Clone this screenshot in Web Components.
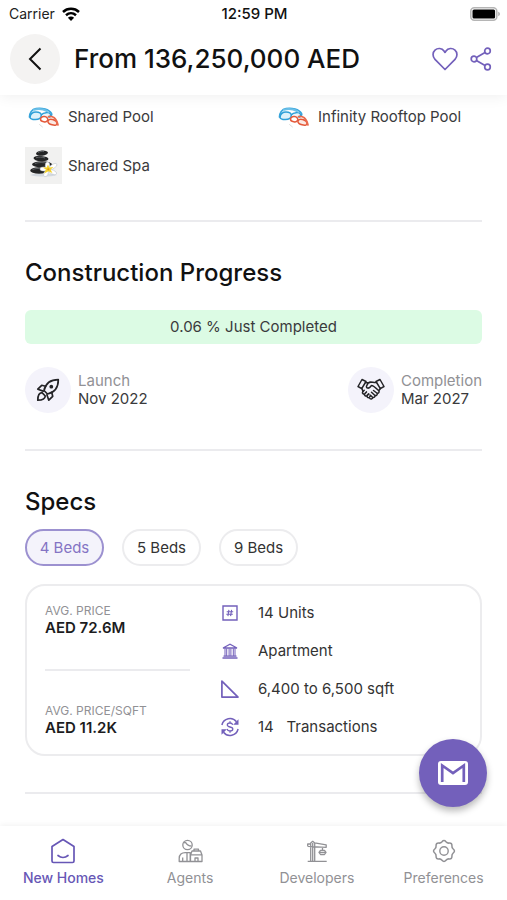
<!DOCTYPE html>
<html lang="en">
<head>
<meta charset="utf-8">
<meta name="viewport" content="width=device-width, initial-scale=1">
<title>From 136,250,000 AED</title>
<style>
  :root {
    --accent: #7360bb;
    --ink: #111;
    --text: #3a3a3c;
    --muted: #919195;
    --line: #ebebee;
    --tint: #f4f3fb;
  }
  html, body { margin: 0; height: 100%; }
  body { background: #fff; color: var(--text); font-family: Inter, "Liberation Sans", sans-serif; font-size: 15px; line-height: 20px; }
</style>
</head>
<body>
<listing-screen></listing-screen>
<script>
const ICONS = {
  wifi: ['0 0 18 14', `<g fill="none" stroke="#000" stroke-width="2.5"><path d="M1 5C5.500.8 12.500.8 17 5"/><path d="M4 8.200c3-2.700 7-2.700 10 0"/></g><path d="M9 14 5.900 10.700c1.800-1.500 4.400-1.500 6.200 0Z"/>`],
  battery: ['0 0 30 14', `<rect x=".8" y=".8" width="26" height="12.400" rx="3.500" fill="#fff" stroke="#b5b5b5" stroke-width="1.500"/><rect x="2.500" y="2.500" width="22.600" height="9" rx="1.500"/><path d="M28.300 4.800c2 .7 2 3.700 0 4.400Z" fill="#a5a5a5"/>`],
  back: ['0 0 14 24', `<path d="M12.500 1.500 2 12l10.500 10.500" fill="none" stroke="#111" stroke-width="2"/>`],
  heart: ['0 0 26 24', `<path d="M13 22.500 3 12.300C.3 9.500.5 5.300 3 3.100c2.800-2.500 7-2 9 .9l1 1.400L14 4c2-2.900 6.200-3.400 9-.9 2.500 2.200 2.700 6.400 0 9.200Z" fill="none" stroke="currentColor" stroke-width="1.700" stroke-linejoin="round"/>`],
  share: ['0 0 22 24', `<g fill="none" stroke="currentColor" stroke-width="1.700"><circle cx="4" cy="12" r="2.800"/><circle cx="17.500" cy="4" r="2.800"/><circle cx="17.500" cy="20" r="2.800"/><path d="m6.400 10.500 8.600-5M6.400 13.500l8.600 5"/></g>`],
  pool: ['0 0 37 37', `<g fill="none" stroke-linecap="round" stroke-linejoin="round"><path d="M4.500 19c0-4 2.500-8 6.500-8.500 6-.8 13 .5 15.500 5 .8 1.600-.5 3-2.500 3.500" stroke="#3aa6dc" stroke-width="1.700"/><path d="M5 19.300c.5-3.500 3-5.300 6-5.300 3.300 0 5.500 1.300 5.300 3.500-.3 2.800-3 4-6 4-2.700 0-5-.6-5.300-2.200Z" fill="#dff1fa" stroke="#2f9fd8" stroke-width="1.500"/><path d="M16.300 17c2-2.800 8-3.200 9.300-.5.500 1.200-.5 2-1.600 2.400" fill="#eaf6fb" stroke="#2f9fd8" stroke-width="1.400"/><path d="M9 11.700c4-1.200 9-.8 13 1.300" stroke="#6cc0e8" stroke-width="2"/><path d="M15.500 21.300c0-2 2-3 4-2.700 2.300.3 3.500 1.700 3.200 3.300-.4 1.700-2.200 2.300-4 1.900-1.900-.3-3.200-1.200-3.200-2.500Z" fill="#fff" stroke="#e4593a" stroke-width="1.500"/><path d="M23 23c.5-1.700 2.500-2 4.600-1.500 2.600.7 4.600 2.600 4.400 4.500-.2 1.300-2.500 1.500-4.900.8-2.600-.7-4.600-2-4.100-3.800Z" fill="#fbe8e2" stroke="#e4593a" stroke-width="1.500"/><path d="M23.500 18.500c4-1 8 1.500 9.500 8.500" stroke="#ea6a4c" stroke-width="1.700"/><path d="m14.500 26.500 3 2.500" stroke="#ddd" stroke-width="1"/></g>`],
  spa: ['0 0 37 37', `<path fill="#f1f1f0" d="M0 0h37v37H0z"/><path d="M5 28c5-2 23-2 27 0-6 2-21 2-27 0Z" fill="#d3d9e0"/><g fill="#242526"><ellipse cx="17" cy="6.200" rx="6" ry="2.600" transform="rotate(-6 17 6.200)"/><ellipse cx="16" cy="11.600" rx="7.500" ry="2.700" transform="rotate(4 16 11.600)"/><ellipse cx="17" cy="17.300" rx="10" ry="3"/><ellipse cx="14" cy="23.500" rx="8.800" ry="3.300"/></g><g stroke="#777b80" stroke-width=".7" fill="none"><path d="M13 5.500c2-1.200 4-1.300 6-.9M11 10.800c3-1 6-.9 9 .2M10 16.500c4-1.300 8-1.300 13 0M7.500 22.700c3-1.500 6-1.500 9-.7"/></g><g fill="#fff" stroke="#b9c1c7" stroke-width=".5"><ellipse cx="22.500" cy="18.800" rx="2.300" ry="3.800"/><ellipse cx="28" cy="19.500" rx="4.500" ry="2" transform="rotate(-32 28 19.500)"/><ellipse cx="27.500" cy="25" rx="4.500" ry="2" transform="rotate(25 27.500 25)"/><ellipse cx="21" cy="26.500" rx="2.100" ry="3.400" transform="rotate(25 21 26.500)"/><ellipse cx="18.500" cy="22" rx="3.500" ry="2"/></g><path d="m23 17.500 1.300 3.100 4.200-.5-2.900 2.500 1.800 3.500-4-1.900-4.300 2.400 1.800-4.100-3.200-2.100 4 .1Z" fill="#f3d22c"/><circle cx="23.300" cy="22.300" r="1.100" fill="#dd9c12"/>`],
  rocket: ['0 0 24 24', `<g fill="none" stroke="#242427" stroke-width="1.700" stroke-linejoin="round" stroke-linecap="round"><path d="M8 12.500C9.500 6 14.500 1.700 22.300 1.700c0 7.800-4.300 12.800-10.800 14.300Z"/><path d="m9.700 8.300-4-1-3.900 3.900 5.400 1.900M15.700 14.300l1 4-3.900 3.900-1.900-5.400"/><path d="M6 14.700c-3.200.3-4.200 2.800-4.200 7.500 4.700 0 7.200-1 7.500-4.200Z"/></g><circle cx="15.300" cy="8.700" r="1.900" fill="#242427"/>`],
  hands: ['0 0 28 24', `<g fill="none" stroke="#242427" stroke-width="1.500" stroke-linejoin="round" stroke-linecap="round"><path d="m5 1.500 4 2-4.300 7.200L1 8.500ZM23 1.500l-4 2 4.300 7.200L27 8.500Z"/><path d="M8.500 4.500c2 .5 3.400.3 4.500 0M19.500 4.500c-2.500.3-4-.5-6-.5-2.300 0-3 1.500-4 4.300-.5 2 2.300 2.500 3.700.7l1.300-1.600c2 0 3.500 1.600 7 5.100 1.500 1.500 0 3.400-1.700 2.500L16.500 12.500M20 15.200c.8 1.700-.8 3-2.300 2l-3.200-2.900M18 17.400c.4 1.600-1.200 2.600-2.600 1.600l-2.400-2M15.700 19.300c0 1.700-1.700 2.200-2.900 1.200M5 10.700 6 13.500M23.200 10.700l-1.400 2"/><path d="m7.200 12.200-1.500 1.600c-1 1.500.9 2.900 2.200 1.700l1.500-1.600M9.500 14l-1.700 1.800c-1 1.500.8 2.900 2.100 1.700l1.700-1.700M11.800 16l-1.500 1.600c-.9 1.500.9 2.700 2.100 1.600l1.200-1.400"/></g>`],
  units: ['0 0 20 20', `<g fill="none" stroke="currentColor"><path d="M3 3h14v14H3z" stroke-width="1.400"/><path d="m8.900 6.800-1 6.400m3.700-6.400-1 6.400M6.700 8.700h6.500M6.300 11.300h6.500" stroke-width="1.100"/></g>`],
  building: ['0 0 20 20', `<g fill="none" stroke="currentColor" stroke-width="1.300"><path d="M3 7 10 3.200 17 7ZM2.500 17h15M3.500 15.200h13"/><path d="M5 7.500v7.500m1.700-7.500v7.500m2.400-7.500v7.500m1.800-7.500v7.500m2.400-7.500v7.500m1.700-7.500v7.500" stroke-width="1"/></g>`],
  area: ['0 0 20 20', `<path d="M1.900 2.200v15.900H18Z" fill="none" stroke="currentColor" stroke-width="1.700" stroke-linejoin="round"/>`],
  money: ['0 0 20 20', `<g fill="none" stroke="currentColor" stroke-width="1.500"><path d="M1.900 8A8.300 8.300 0 0 1 16.500 4.800M18.100 12A8.300 8.300 0 0 1 3.500 15.200"/><path d="M12.700 7.700c-.5-1.300-1.500-1.700-2.800-1.700-1.600 0-2.600.8-2.600 2 0 2.700 5.500 1.300 5.500 4 0 1.200-1.100 2-2.800 2-1.600 0-2.600-.7-3-2M10 4.300v1.700M10 14v1.700" stroke-width="1.300"/></g><path d="M18.500 2.200v5.500h-5.300ZM1.500 17.800v-5.500h5.300Z" fill="currentColor"/>`],
  mail: ['0 0 30 24', `<rect width="30" height="24" rx="3" fill="#fff"/><path d="M4.200 21V4.500L15 12 25.800 4.500V21" fill="none" stroke="#7360bb" stroke-width="2.700"/>`],
  home: ['0 0 26 26', `<g fill="none" stroke="currentColor" stroke-width="1.700" stroke-linejoin="round" stroke-linecap="round"><path d="M2 8.500 13 1.500l11 7V23c0 1-.5 1.500-1.500 1.500h-19C2.500 24.500 2 24 2 23Z"/><path d="M8 17.500c3 2.600 7 2.600 10 0"/></g>`],
  agents: ['0 0 26 26', `<g fill="none" stroke="currentColor" stroke-width="1.300" stroke-linejoin="round"><circle cx="10.500" cy="7" r="4.700"/><path d="M6.500 5 8.500 4.300c1.500 2.500 3.500 3.700 6 3.700M2.200 23.500v-3c0-4 2.500-5.800 6-5.800h5v8.800ZM10 15v8.500M5.700 19.500v4M13.500 17l1.500-4h8.500l1.500 4v6.500H13.500ZM13.500 16.900h11.500M18 23.500v-3.500h3v3.500M17 12.800v-1.600h4.500v1.600"/></g>`],
  crane: ['0 0 26 26', `<g fill="none" stroke="currentColor" stroke-width="1.300" stroke-linejoin="round"><path d="M6.700 23V5l2-1.700 2 1.700v18M8.700 5v18M3.700 8.300V6h3M10.700 4.800l11.500 2v2.500L3.700 8.300M3.700 23.300h19M18.500 9.300v3M16.500 12.300h4l1.500 2-1.500 2.200h-4L15 14.300ZM15 14.300h7"/></g>`],
  gear: ['0 0 26 26', `<g fill="none" stroke="currentColor" stroke-width="1.400" stroke-linejoin="round"><path d="M11.200 4.600Q13 2.400 14.800 4.600 16 6 17.700 5.800 20.400 5.600 20.200 8.300 20 10 21.400 11.200 23.600 13 21.400 14.800 20 16 20.200 17.700 20.400 20.400 17.700 20.200 16 20 14.800 21.400 13 23.600 11.200 21.400 10 20 8.300 20.200 5.600 20.400 5.800 17.700 6 16 4.600 14.800 2.400 13 4.600 11.200 6 10 5.800 8.300 5.600 5.600 8.300 5.800 10 6 11.200 4.600Z" transform="translate(-1.300 -1.300) scale(1.100)"/><circle cx="13" cy="13" r="4.200"/></g>`]
};

function define(name, css, html) {
  customElements.define(name, class extends HTMLElement {
    connectedCallback() {
      if (this.shadowRoot) return;
      const markup = typeof html === 'function' ? html(this) : html;
      this.attachShadow({ mode: 'open' }).innerHTML = `<style>*{box-sizing:border-box}${css}</style>${markup}`;
    }
  });
}

define('app-icon', `
  :host { display: inline-flex; flex: none; }
  svg { display: block; width: var(--w, 20px); height: var(--h, 20px); }
`, el => { const [box, art] = ICONS[el.getAttribute('name')]; return `<svg viewBox="${box}" aria-hidden="true">${art}</svg>`; });

define('status-bar', `
  :host { display: grid; grid-template-columns: 1fr auto 1fr; align-items: center; height: 28px; padding: 0 7px 0 9px; color: #222; font-size: 14px; line-height: 18px; }
  .left { display: flex; align-items: center; gap: 7px; }
  .time { color: #111; font-size: 15px; font-weight: 500; }
  .right { justify-self: end; display: flex; }
  .wifi { --w: 18px; --h: 14px; } .bat { --w: 30px; --h: 14px; }
`, `<span class="left"><span>Carrier</span><app-icon class="wifi" name="wifi"></app-icon></span>
    <span class="time">12:59 PM</span>
    <span class="right"><app-icon class="bat" name="battery"></app-icon></span>`);

define('page-header', `
  :host { display: block; background: #fff; box-shadow: 0 1px 14px rgba(0,0,0,.07); position: relative; z-index: 1; }
  .bar { display: flex; align-items: center; padding: 6px 8px 11px 10px; }
  button { border: 0; background: none; padding: 0; color: var(--accent); display: flex; align-items: center; justify-content: center; }
  .back { width: 50px; height: 50px; border-radius: 50%; background: #f4f3f2; --w: 14px; --h: 24px; }
  h1 { flex: 1; margin: 0 0 0 14px; font-size: 26px; line-height: 32px; font-weight: 500; color: var(--ink); white-space: nowrap; }
  .heart { width: 36px; height: 36px; --w: 26px; --h: 24px; }
  .share { width: 36px; height: 36px; --w: 22px; --h: 24px; }
`, `<status-bar></status-bar>
    <div class="bar">
      <button class="back" aria-label="Back"><app-icon name="back"></app-icon></button>
      <h1><slot></slot></h1>
      <button class="heart" aria-label="Save"><app-icon name="heart"></app-icon></button>
      <button class="share" aria-label="Share"><app-icon name="share"></app-icon></button>
    </div>`);

define('page-section', `
  :host { display: block; padding: 35px 0 36px; border-bottom: 2px solid var(--line); }
  :host(:first-child) { padding-top: 3px; }
  h2 { margin: 0; font-size: 24px; line-height: 32px; font-weight: 500; color: var(--ink); }
`, el => `${el.hasAttribute('heading') ? `<h2>${el.getAttribute('heading')}</h2>` : ''}<slot></slot>`);

define('amenity-grid', `:host { display: grid; grid-template-columns: 1fr 1fr; gap: 12px 43px; }`, `<slot></slot>`);
define('amenity-item', `
  :host { display: flex; align-items: center; gap: 6px; white-space: nowrap; --w: 37px; --h: 37px; }
`, el => `<app-icon name="${el.getAttribute('icon')}"></app-icon><span><slot></slot></span>`);

define('progress-banner', `
  :host { display: block; margin-top: 21px; padding: 7px; border-radius: 6px; background: #dcfbe4; text-align: center; }
`, `<slot></slot>`);

define('milestone-row', `:host { display: flex; justify-content: space-between; margin-top: 23px; }`, `<slot></slot>`);
define('milestone-item', `
  :host { display: flex; align-items: center; gap: 7px; line-height: 18px; }
  .disc { width: 46px; height: 46px; border-radius: 50%; background: var(--tint); display: flex; align-items: center; justify-content: center; --w: 28px; --h: 24px; }
  .label { display: block; color: var(--muted); }
`, el => `<span class="disc"><app-icon name="${el.getAttribute('icon')}"></app-icon></span>
   <span><span class="label">${el.getAttribute('label')}</span><slot></slot></span>`);

define('chip-row', `:host { display: flex; gap: 18px; margin-top: 11px; }`, `<slot></slot>`);
define('bed-chip', `
  :host { display: block; }
  button { font: inherit; color: #333; width: 79px; height: 37px; padding: 0; border: 2px solid #ececee; border-radius: 19px; background: #fff; white-space: nowrap; }
  button[aria-pressed=true] { color: #8474c4; border-color: #9c91d0; background: var(--tint); }
`, el => `<button aria-pressed="${el.hasAttribute('selected')}"><slot></slot></button>`);

define('spec-card', `
  :host { display: grid; grid-template-columns: 145px 1fr; gap: 30px; margin-top: 18px; padding: 17px 18px; border: 2px solid #ececee; border-radius: 20px; }
  .prices { display: flex; flex-direction: column; justify-content: space-between; }
  .facts { display: flex; flex-direction: column; gap: 18px; }
  hr { width: 100%; margin: 0; border: 0; border-top: 2px solid var(--line); }
`, `<div class="prices"><slot name="top"></slot><hr><slot name="bottom"></slot></div>
    <div class="facts"><slot></slot></div>`);
define('price-stat', `
  :host { display: block; }
  .label { display: block; font-size: 12px; line-height: 16px; color: var(--muted); }
  .value { display: block; font-size: 15px; line-height: 18px; font-weight: 600; color: #1c1c1e; }
`, el => `<span class="label">${el.getAttribute('label')}</span><span class="value"><slot></slot></span>`);
define('spec-fact', `
  :host { display: flex; align-items: center; gap: 18px; white-space: pre; color: #333; }
  app-icon { color: var(--accent); }
`, el => `<app-icon name="${el.getAttribute('icon')}"></app-icon><span><slot></slot></span>`);

define('mail-button', `
  :host { position: absolute; right: 20px; bottom: 93px; z-index: 2; }
  button { width: 68px; height: 68px; border: 0; padding: 0; border-radius: 50%; background: var(--accent); box-shadow: 0 4px 7px rgba(0,0,0,.28); display: flex; align-items: center; justify-content: center; --w: 30px; --h: 24px; }
`, `<button aria-label="Send a message"><app-icon name="mail"></app-icon></button>`);

define('tab-bar', `
  :host { display: block; background: #fff; box-shadow: 0 -1px 6px rgba(0,0,0,.06); position: relative; z-index: 1; }
  nav { display: grid; grid-template-columns: repeat(4, 1fr); padding: 12px 0; }
`, `<nav><slot></slot></nav>`);
define('tab-item', `
  :host { display: block; font-size: 14px; --w: 26px; --h: 26px; }
  a { display: flex; flex-direction: column; align-items: center; gap: 4px; color: var(--muted); text-decoration: none; white-space: nowrap; }
  a[aria-current] { color: #6757b6; font-weight: 500; }
`, el => `<a href="#"${el.hasAttribute('current') ? ' aria-current="page"' : ''}><app-icon name="${el.getAttribute('icon')}"></app-icon><span><slot></slot></span></a>`);

define('listing-screen', `
  :host { display: flex; flex-direction: column; height: 100vh; position: relative; overflow: hidden; }
  main { flex: 1; min-height: 0; overflow: hidden; padding: 0 25px; }
`, `<page-header>From 136,250,000 AED</page-header>
    <main>
      <page-section>
        <amenity-grid>
          <amenity-item icon="pool">Shared Pool</amenity-item>
          <amenity-item icon="pool">Infinity Rooftop Pool</amenity-item>
          <amenity-item icon="spa">Shared Spa</amenity-item>
        </amenity-grid>
      </page-section>
      <page-section heading="Construction Progress">
        <progress-banner>0.06 % Just Completed</progress-banner>
        <milestone-row>
          <milestone-item icon="rocket" label="Launch">Nov 2022</milestone-item>
          <milestone-item icon="hands" label="Completion">Mar 2027</milestone-item>
        </milestone-row>
      </page-section>
      <page-section heading="Specs">
        <chip-row>
          <bed-chip selected>4 Beds</bed-chip>
          <bed-chip>5 Beds</bed-chip>
          <bed-chip>9 Beds</bed-chip>
        </chip-row>
        <spec-card>
          <price-stat slot="top" label="AVG. PRICE">AED 72.6M</price-stat>
          <price-stat slot="bottom" label="AVG. PRICE/SQFT">AED 11.2K</price-stat>
          <spec-fact icon="units">14 Units</spec-fact>
          <spec-fact icon="building">Apartment</spec-fact>
          <spec-fact icon="area">6,400 to 6,500 sqft</spec-fact>
          <spec-fact icon="money">14   Transactions</spec-fact>
        </spec-card>
      </page-section>
    </main>
    <mail-button></mail-button>
    <tab-bar>
      <tab-item icon="home" current>New Homes</tab-item>
      <tab-item icon="agents">Agents</tab-item>
      <tab-item icon="crane">Developers</tab-item>
      <tab-item icon="gear">Preferences</tab-item>
    </tab-bar>`);
</script>
</body>
</html>
